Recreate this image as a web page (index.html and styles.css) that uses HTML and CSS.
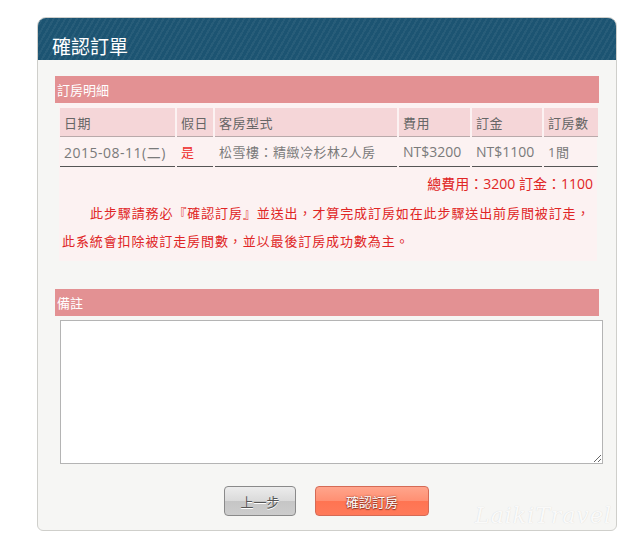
FILE: index.html
```html
<!DOCTYPE html>
<html lang="zh-Hant">
<head>
<meta charset="utf-8">
<title>確認訂單</title>
<link rel="stylesheet" href="styles.css">
</head>
<body>
<div class="panel">
  <div class="panel-head"><h1>確認訂單</h1></div>
  <div class="panel-body">
    <div class="bar">訂房明細</div>
    <div class="detail">
      <table class="orders">
        <colgroup>
          <col class="c1"><col class="c2"><col class="c3"><col class="c4"><col class="c5"><col class="c6">
        </colgroup>
        <thead>
          <tr><th>日期</th><th>假日</th><th>客房型式</th><th>費用</th><th>訂金</th><th>訂房數</th></tr>
        </thead>
        <tbody>
          <tr><td class="date">2015-08-11(二)</td><td class="red">是</td><td class="cjk">松雪樓：精緻冷杉林2人房</td><td>NT$3200</td><td>NT$1100</td><td class="cjk">1間</td></tr>
        </tbody>
      </table>
      <div class="total">總費用：3200 訂金：1100</div>
      <p class="notice">此步驟請務必『確認訂房』並送出，才算完成訂房如在此步驟送出前房間被訂走，<br>此系統會扣除被訂走房間數，並以最後訂房成功數為主。</p>
    </div>
    <div class="bar bar-note">備註</div>
    <textarea class="memo"></textarea>
    <div class="actions">
      <button class="btn btn-back">上一步</button>
      <button class="btn btn-ok">確認訂房</button>
    </div>
    <div class="watermark">LaikiTravel</div>
  </div>
</div>
</body>
</html>
```

FILE: styles.css
```css
html, body {
  margin: 0;
  padding: 0;
  background: #ffffff;
}
body {
  font-family: "Open Sans", "Noto Sans CJK TC", sans-serif;
  font-size: 13px;
  color: #777;
}
.panel {
  margin: 17px 0 0 37px;
  width: 578px;
  border: 1px solid #cfcfcb;
  border-radius: 9px 9px 6px 6px;
  overflow: hidden;
  background: #f6f6f4;
}
.panel-head {
  height: 42px;
  background-color: #1c5472;
  background-image: repeating-linear-gradient(120deg, rgba(255,255,255,0) 0px, rgba(255,255,255,0) 3px, rgba(255,255,255,0.05) 3px, rgba(255,255,255,0.05) 5px);
  display: flex;
  align-items: flex-end;
}
.panel-head h1 {
  margin: 0 0 0 14px;
  font-family: "Noto Sans CJK TC", sans-serif;
  font-weight: 400;
  font-size: 19px;
  line-height: 28px;
  color: #ffffff;
}
.panel-body {
  position: relative;
  padding: 16px 0 14px 17px;
}
.bar {
  width: 544px;
  height: 27px;
  background: #e39193;
  color: #fff;
  font-family: "Noto Sans CJK TC", sans-serif;
  font-size: 13px;
  line-height: 28px;
  padding-left: 2px;
  box-sizing: border-box;
}
.detail {
  margin-left: 4px;
  width: 538px;
  background: #fcf2f2;
  padding: 5px 0 6px 0;
}
.orders {
  border-collapse: separate;
  border-spacing: 2px 0;
  margin-left: -1px;
  width: 540px;
  table-layout: fixed;
  font-family: "Open Sans", "Noto Sans CJK TC", sans-serif;
  font-size: 14px;
}
.c1 { width: 115px; }
.c2 { width: 36px; }
.c3 { width: 182px; }
.c4 { width: 71px; }
.c5 { width: 70px; }
.c6 { width: 54px; }
.orders th {
  background: #f5d6d8;
  font-weight: 400;
  text-align: left;
  color: #666;
  height: 28px;
  padding: 0 0 0 4px;
  border-bottom: 1px solid #b9a9aa;
  font-family: "Noto Sans CJK TC", sans-serif;
  font-size: 13px;
  letter-spacing: 0.5px;
}
.orders td {
  height: 29px;
  padding: 0 0 0 4px;
  border-bottom: 1px solid #555;
  color: #7a7a7a;
  white-space: nowrap;
  overflow: hidden;
}
.orders td.date {
  letter-spacing: 0.5px;
}
.orders td.cjk {
  font-size: 13px;
  letter-spacing: 0.5px;
}
.orders td.red {
  color: #ee2a2a;
  font-family: "Noto Sans CJK TC", sans-serif;
  font-size: 13px;
}
.total {
  text-align: right;
  color: #e02525;
  padding-right: 4px;
  line-height: 22px;
  margin-top: 6px;
  font-size: 14px;
}
.notice {
  margin: 4px 0 0 0;
  padding: 0 2px 0 3px;
  color: #e02525;
  line-height: 28px;
  text-indent: 28px;
  font-family: "Noto Sans CJK TC", sans-serif;
  font-size: 13px;
  letter-spacing: 0.9px;
  white-space: nowrap;
}
.bar-note {
  margin-top: 28px;
}
.memo {
  display: block;
  margin: 4px 0 0 5px;
  width: 543px;
  height: 144px;
  box-sizing: border-box;
  border: 1px solid #b4b4b4;
  background: #fff;
  resize: both;
}
.actions {
  display: flex;
  justify-content: flex-start;
  gap: 19px;
  margin: 22px 0 0 169px;
}
.btn {
  height: 30px;
  border-radius: 4px;
  font-family: "Noto Sans CJK TC", sans-serif;
  font-size: 13px;
  padding: 0;
  cursor: pointer;
}
.btn-back {
  width: 72px;
  border: 1px solid #8a8a8a;
  color: #555;
  text-shadow: 0 1px 0 #fff;
  background: linear-gradient(#ececec 0%, #dadada 50%, #c6c6c6 51%, #cdcdcd 100%);
}
.btn-ok {
  width: 114px;
  border: 1px solid #d56a55;
  color: #fff;
  text-shadow: 0 0 2px #8a3020, 0 1px 1px #8a3020;
  background: linear-gradient(#ffa58c 0%, #ff8f72 50%, #ff7452 51%, #ff7a5a 100%);
}
.watermark {
  position: absolute;
  right: 4px;
  bottom: 1px;
  font-family: "DejaVu Serif", serif;
  font-style: italic;
  font-size: 22px;
  line-height: 26px;
  color: rgba(255,255,255,0.9);
  text-shadow: 0 0 1px rgba(0,0,0,0.15);
  letter-spacing: 1px;
}
```
